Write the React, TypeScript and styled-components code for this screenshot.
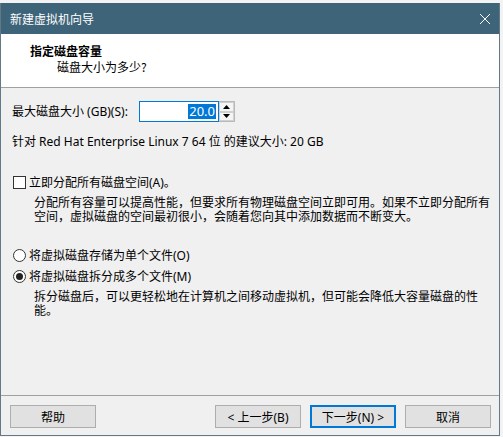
import React from "react";
import styled, { createGlobalStyle } from "styled-components";

const Global = createGlobalStyle`
  html, body { margin: 0; padding: 0; background: #f3f3f3; }
  body { width: 503px; height: 437px; overflow: hidden;
    font-family: "Noto Sans", "Noto Sans CJK SC", sans-serif; font-size: 12px; color: #000; }
  * { box-sizing: border-box; }
`;

const Page = styled.div`
  padding-top: 3px;
  width: 503px;
  height: 437px;
`;

const Window = styled.div`
  width: 500px;
  height: 433px;
  border: 1px solid #627a88;
  border-top: none;
  background: #f0f0f0;
  display: flex;
  flex-direction: column;
`;

const TitleBar = styled.div`
  height: 31px;
  background: #3e6479;
  color: #fff;
  display: flex;
  align-items: center;
  justify-content: space-between;
  padding: 0 8px 0 9px;
  font-family: "Noto Sans CJK SC", sans-serif;
  font-size: 12px;
`;

const Header = styled.div`
  background: #fff;
  height: 54px;
  border-bottom: 1px solid #a0a0a0;
  padding: 9px 0 0 29px;
  font-family: "Noto Sans CJK SC", sans-serif;
`;

const Heading = styled.div`
  font-weight: bold;
  font-size: 12px;
  line-height: 16px;
`;

const SubHeading = styled.div`
  padding-left: 27px;
  line-height: 16px;
`;

const Content = styled.div`
  flex: 1;
  padding: 13px 11px 0 11px;
  display: flex;
  flex-direction: column;
`;

const SizeRow = styled.div`
  display: flex;
  align-items: center;
  height: 21px;
`;

const Label = styled.span`
  width: 127px;
  line-height: 16px;
`;

const InputBox = styled.div`
  width: 80px;
  height: 21px;
  border: 1px solid #0078d7;
  background: #fff;
  display: flex;
  align-items: center;
  justify-content: flex-end;
  padding-right: 2px;
`;

const Selected = styled.span`
  background: #0078d7;
  color: #fff;
  font-size: 13px;
  line-height: 15px;
  padding: 0 1px;
`;

const Spinner = styled.div`
  width: 16px;
  height: 21px;
  display: flex;
  flex-direction: column;
  border: 1px solid #b9b9b9;
  border-left: none;
  background: #f0f0f0;
`;

const SpinBtn = styled.div`
  flex: 1;
  display: flex;
  align-items: center;
  justify-content: center;
  border: 1px solid #d0d0d0;
  background: #f5f5f5;
`;

const Text = styled.div<{ $mt?: number }>`
  margin-top: ${(p) => p.$mt ?? 0}px;
  line-height: 16px;
`;

const Desc = styled.div<{ $mt?: number; $w: number }>`
  margin-top: ${(p) => p.$mt ?? 0}px;
  margin-left: 22px;
  line-height: 14px;
  width: ${(p) => p.$w}px;
  word-break: break-all;
`;

const OptionRow = styled.div<{ $mt?: number }>`
  margin-top: ${(p) => p.$mt ?? 0}px;
  display: flex;
  align-items: center;
  gap: 3px;
  height: 16px;
`;

const CheckBox = styled.span`
  width: 13px;
  height: 13px;
  border: 1px solid #333;
  background: #fff;
  margin-left: 1px;
`;

const Radio = styled.span<{ $on?: boolean }>`
  width: 13px;
  height: 13px;
  border-radius: 50%;
  border: 1px solid #333;
  background: #fff;
  margin-left: 1px;
  display: flex;
  align-items: center;
  justify-content: center;
  &::after {
    content: "";
    width: 7px;
    height: 7px;
    border-radius: 50%;
    background: ${(p) => (p.$on ? "#222" : "transparent")};
  }
`;

const Spacer = styled.div`
  flex: 1;
`;

const Footer = styled.div`
  border-top: 1px solid #a0a0a0;
  height: 40px;
  display: flex;
  align-items: flex-start;
  padding: 9px 0 0 9px;
  gap: 9px;
`;

const Button = styled.div<{ $default?: boolean }>`
  width: 86px;
  height: 23px;
  background: #e1e1e1;
  border: ${(p) => (p.$default ? "2px solid #0078d7" : "1px solid #adadad")};
  display: flex;
  align-items: center;
  justify-content: center;
  font-size: 12px;
`;

const Gap = styled.div`
  width: 101px;
`;

export default function App() {
  return (
    <>
      <Global />
      <Page>
        <Window>
          <TitleBar>
            <span>新建虚拟机向导</span>
            <svg width="12" height="12" viewBox="0 0 12 12">
              <path d="M1 1 L11 11 M11 1 L1 11" stroke="#fff" strokeWidth="1" />
            </svg>
          </TitleBar>
          <Header>
            <Heading>指定磁盘容量</Heading>
            <SubHeading>磁盘大小为多少?</SubHeading>
          </Header>
          <Content>
            <SizeRow>
              <Label>最大磁盘大小 (GB)(S):</Label>
              <InputBox>
                <Selected>20.0</Selected>
              </InputBox>
              <Spinner>
                <SpinBtn>
                  <svg width="7" height="4" viewBox="0 0 7 4"><path d="M3.5 0 L7 4 L0 4 Z" fill="#000" /></svg>
                </SpinBtn>
                <SpinBtn>
                  <svg width="7" height="4" viewBox="0 0 7 4"><path d="M0 0 L7 0 L3.5 4 Z" fill="#000" /></svg>
                </SpinBtn>
              </Spinner>
            </SizeRow>
            <Text $mt={12}>针对 Red Hat Enterprise Linux 7 64 位 的建议大小: 20 GB</Text>
            <OptionRow $mt={24}>
              <CheckBox />
              <span>立即分配所有磁盘空间(A)。</span>
            </OptionRow>
            <Desc $mt={6} $w={458}>
              分配所有容量可以提高性能，但要求所有物理磁盘空间立即可用。如果不立即分配所有空间，虚拟磁盘的空间最初很小，会随着您向其中添加数据而不断变大。
            </Desc>
            <OptionRow $mt={23}>
              <Radio />
              <span>将虚拟磁盘存储为单个文件(O)</span>
            </OptionRow>
            <OptionRow $mt={5}>
              <Radio $on />
              <span>将虚拟磁盘拆分成多个文件(M)</span>
            </OptionRow>
            <Desc $mt={6} $w={448}>
              拆分磁盘后，可以更轻松地在计算机之间移动虚拟机，但可能会降低大容量磁盘的性能。
            </Desc>
            <Spacer />
          </Content>
          <Footer>
            <Button>帮助</Button>
            <Gap />
            <Button>&lt; 上一步(B)</Button>
            <Button $default>下一步(N) &gt;</Button>
            <Button>取消</Button>
          </Footer>
        </Window>
      </Page>
    </>
  );
}
